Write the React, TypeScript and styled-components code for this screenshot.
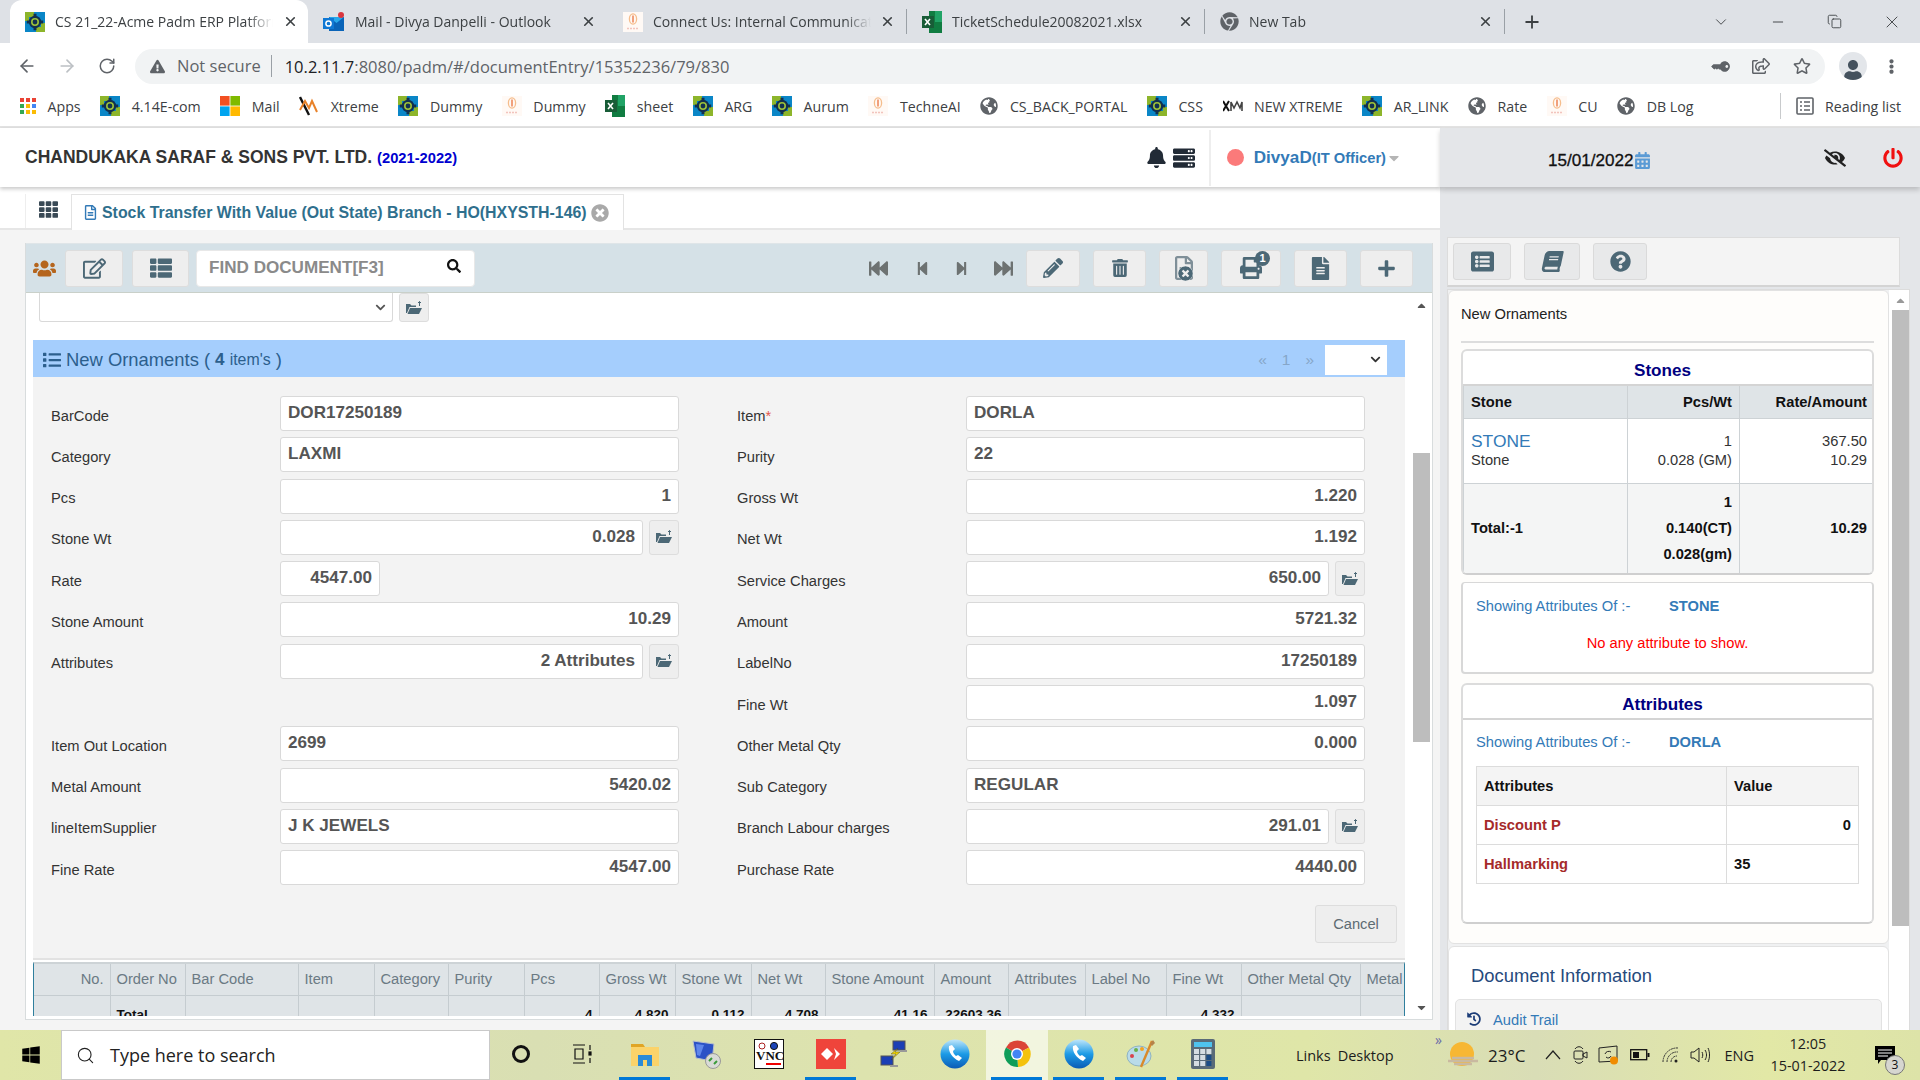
import React from "react";
import styled, { createGlobalStyle } from "styled-components";
import {
  FaBell,
  FaServer,
  FaRegEdit,
  FaThList,
  FaSearch,
  FaFastBackward,
  FaStepBackward,
  FaStepForward,
  FaFastForward,
  FaPencilAlt,
  FaTrashAlt,
  FaFileAlt,
  FaRegFileAlt,
  FaPlus,
  FaPrint,
  FaUsers,
  FaEyeSlash,
  FaPowerOff,
  FaCalendarAlt,
  FaBook,
  FaQuestionCircle,
  FaListAlt,
  FaList,
  FaTimesCircle,
  FaHistory,
  FaTh,
  FaCaretDown,
  FaCaretUp,
  FaChevronDown,
  FaGlobeAmericas,
  FaExclamationTriangle,
  FaKey,
  FaRegStar,
  FaRegShareSquare,
  FaUser,
  FaEllipsisV,
  FaWindows,
  FaChrome,
} from "react-icons/fa";
import { ArrowLeft, ArrowRight, RotateCw, ChevronDown, Minus, Copy, X, Plus, Search } from "lucide-react";

const GlobalStyle = createGlobalStyle`
  html, body {
    margin: 0;
    padding: 0;
    width: 1920px;
    height: 1080px;
    overflow: hidden;
    background: #fff;
    font-family: "Liberation Sans", Arial, sans-serif;
    font-size: 14.7px;
    color: #333;
  }
  * { box-sizing: border-box; }
`;

const CHROME_FONT = `"Open Sans", "Noto Sans", sans-serif`;

const Page = styled.div`
  width: 1920px;
  height: 1080px;
  display: flex;
  flex-direction: column;
  overflow: hidden;
`;

/* browser chrome */
const TabStrip = styled.div`
  height: 43px;
  flex: none;
  background: #dee1e6;
  display: flex;
  padding-left: 10px;
  font-family: ${CHROME_FONT};
  font-size: 14px;
  color: #3c4043;
`;

const BrowserTab = styled.div<{ $active?: boolean; $divider?: boolean; $width: number }>`
  position: relative;
  width: ${({ $width }) => $width}px;
  height: 43px;
  display: flex;
  align-items: center;
  padding: 0 ${({ $active }) => ($active ? 10 : 12)}px 0 15px;
  background: ${({ $active }) => ($active ? "#fff" : "transparent")};
  border-radius: ${({ $active }) => ($active ? "12px 12px 0 0" : "0")};

  &::after {
    content: "";
    display: ${({ $divider }) => ($divider ? "block" : "none")};
    position: absolute;
    right: 0;
    top: 9px;
    height: 25px;
    width: 1px;
    background: #9aa0a6;
  }
`;

const TabTitle = styled.span`
  margin-left: 10px;
  width: 218px;
  white-space: nowrap;
  overflow: hidden;
  -webkit-mask-image: linear-gradient(90deg, #000 88%, transparent 100%);
  mask-image: linear-gradient(90deg, #000 88%, transparent 100%);
`;

const TabClose = styled(X)`
  margin-left: auto;
  width: 15px;
  height: 15px;
  color: #3c4043;
  stroke-width: 2.6;
`;

const NewTab = styled.div`
  width: 54px;
  display: flex;
  align-items: center;
  justify-content: center;
  color: #3c4043;
`;

const WindowButtons = styled.div`
  margin-left: auto;
  display: flex;
  align-items: center;
`;

const WindowButton = styled.div`
  width: 57px;
  display: flex;
  justify-content: center;
  color: #3c4043;
`;

const AddressRow = styled.div`
  height: 43px;
  flex: none;
  display: flex;
  align-items: center;
  padding: 3px 0 0 7px;
  background: #fff;
  color: #5f6368;
`;

const NavButton = styled.div<{ $dim?: boolean }>`
  width: 40px;
  display: flex;
  justify-content: center;
  color: ${({ $dim }) => ($dim ? "#bcc0c4" : "#5f6368")};
`;

const Omnibox = styled.div`
  margin-left: 8px;
  width: 1690px;
  height: 35px;
  border-radius: 18px;
  background: #f1f3f4;
  display: flex;
  align-items: center;
  padding: 0 0 0 15px;
  font-family: ${CHROME_FONT};
  font-size: 16.5px;
`;

const NotSecure = styled.span`
  margin-left: 12px;
  padding-right: 10px;
  color: #5f6368;
  border-right: 1.5px solid #9aa0a6;
  line-height: 22px;
`;

const UrlHost = styled.span`
  margin-left: 13px;
  color: #202124;
`;

const UrlPath = styled.span`
  color: #5f6368;
`;

const OmniActions = styled.div`
  margin-left: auto;
  display: flex;
  align-items: center;
  gap: 23px;
  padding-right: 14px;
  color: #5f6368;
`;

const KeyGlyph = styled(FaKey)`
  transform: rotate(45deg);
`;

const Avatar = styled.div`
  margin-left: 14px;
  width: 28px;
  height: 28px;
  border-radius: 50%;
  background: #e3e6ea;
  display: flex;
  align-items: flex-end;
  justify-content: center;
  color: #45525e;
  overflow: hidden;
`;

const MenuDots = styled.div`
  margin-left: 17px;
  color: #5f6368;
  display: flex;
`;

const BookmarkBar = styled.div`
  height: 42px;
  flex: none;
  display: flex;
  align-items: center;
  padding: 0 0 0 20px;
  background: #fff;
  border-bottom: 2px solid #e3e3e3;
  font-family: ${CHROME_FONT};
  font-size: 14.2px;
  color: #3c4043;
`;

const Bookmark = styled.div`
  display: flex;
  align-items: center;
  gap: 11.5px;
  margin-right: 19.6px;
  white-space: nowrap;
`;

const ReadingList = styled.div`
  margin-left: auto;
  display: flex;
  align-items: center;
  gap: 11px;
  padding: 0 19px 0 15px;
  height: 26px;
  border-left: 1px solid #c8cacc;
`;

/* work area */
const Body = styled.div`
  flex: 1;
  display: flex;
  min-height: 0;
`;

const MainColumn = styled.div`
  width: 1440px;
  display: flex;
  flex-direction: column;
  background: #f4f4f4;
`;

const AppHeader = styled.div`
  height: 59px;
  flex: none;
  display: flex;
  align-items: center;
  padding: 0 38px 0 25px;
  background: #fff;
  box-shadow: 0 2px 4px rgba(0, 0, 0, 0.22);
  position: relative;
`;

const CompanyName = styled.span`
  font-weight: 700;
  font-size: 17.5px;
  color: #333;
`;

const FinYear = styled.span`
  margin-left: 5px;
  font-weight: 700;
  font-size: 14.7px;
  color: #0000d0;
`;

const HeaderTools = styled.div`
  margin-left: auto;
  display: flex;
  align-items: center;
  gap: 6px;
  color: #222b36;
`;

const UserBlock = styled.div`
  margin-left: 8px;
  height: 56px;
  padding-left: 16px;
  border-left: 2px solid #eee;
  display: flex;
  align-items: center;
`;

const StatusDot = styled.span`
  width: 17px;
  height: 17px;
  border-radius: 50%;
  background: #fb7a7a;
  margin-right: 10px;
`;

const UserName = styled.span`
  font-weight: 700;
  font-size: 17.1px;
  color: #337ab7;
`;

const UserRole = styled.span`
  font-weight: 700;
  font-size: 14.7px;
  color: #337ab7;
`;

const PageTabs = styled.div`
  height: 43px;
  flex: none;
  display: flex;
  background: #fff;
  border-bottom: 2px solid #e6e6e6;
  padding: 7px 0 0 25px;
`;

const GridTab = styled.div`
  width: 46px;
  display: flex;
  justify-content: center;
  padding-top: 6px;
  color: #3a4a56;
  border-left: 1px solid #eee;
`;

const DocTab = styled.div`
  width: 553px;
  height: 36px;
  display: flex;
  align-items: center;
  padding-left: 11px;
  gap: 4px;
  border: 1px solid #e3e3e3;
  border-bottom: none;
  background: #fff;
`;

const DocTabTitle = styled.span`
  font-weight: 700;
  font-size: 15.9px;
  color: #2f6f8d;
  white-space: nowrap;
`;

const Panel = styled.div`
  margin: 13px 7px 10px 25px;
  flex: 1;
  min-height: 0;
  display: flex;
  flex-direction: column;
  border: 1px solid #d8dcdd;
  border-top: none;
  background: #fff;
`;

const Toolbar = styled.div`
  height: 50px;
  flex: none;
  display: flex;
  align-items: center;
  padding: 0 19px 0 7px;
  background: #d5e1e7;
  border-top: 1px solid #dfe5e8;
  border-bottom: 1px solid #c9d0c9;
`;

const ToolButton = styled.div<{ $width: number }>`
  position: relative;
  width: ${({ $width }) => $width}px;
  height: 37px;
  display: flex;
  align-items: center;
  justify-content: center;
  background: #eee;
  border: 1px solid #ddd;
  border-radius: 3px;
  color: #4c6876;
  margin-left: 13px;
`;

const LeftTool = styled(ToolButton)`
  margin-left: 9px;
`;

const SearchBox = styled.div`
  margin-left: 7px;
  width: 279px;
  height: 37px;
  display: flex;
  align-items: center;
  justify-content: space-between;
  padding: 0 13px 0 12px;
  background: #fff;
  border-radius: 4px;
  border: 1px solid #e8e8e8;
  font-weight: 700;
  font-size: 17.1px;
  color: #8a8a8a;

  svg {
    color: #111;
    margin-bottom: 4px;
  }
`;

const ToolGroup = styled.div`
  margin-left: auto;
  display: flex;
  align-items: center;
`;

const Pager = styled.div`
  display: flex;
  align-items: center;
  color: #6d7272;
`;

const PagerIcon = styled.span<{ $gap: number }>`
  display: flex;
  margin-right: ${({ $gap }) => $gap}px;
`;

const Badge = styled.span`
  position: absolute;
  top: 0;
  right: 10px;
  width: 15px;
  height: 15px;
  border-radius: 50%;
  background: #4c6876;
  color: #fff;
  font-size: 11px;
  font-weight: 700;
  text-align: center;
  line-height: 15px;
`;

const CrossBadge = styled(FaTimesCircle)`
  position: absolute;
  right: 14px;
  bottom: 5px;
  background: #eee;
  border-radius: 50%;
`;

const ScrollFrame = styled.div`
  flex: 1;
  min-height: 0;
  display: flex;
`;

const ScrollContent = styled.div`
  width: 1385px;
  padding-left: 7px;
  padding-right: 5px;
  overflow: hidden;
`;

const SelectRow = styled.div`
  display: flex;
  gap: 6px;
  padding-left: 6px;
  height: 29px;
`;

const FakeSelect = styled.div`
  width: 354px;
  height: 29px;
  display: flex;
  align-items: center;
  justify-content: flex-end;
  padding-right: 6px;
  background: #fff;
  border: 1px solid #d9d9d9;
  border-top: none;
  border-radius: 0 0 3px 3px;
  color: #555;
`;

const FolderButton = styled.div<{ $height: number }>`
  width: 30px;
  height: ${({ $height }) => $height}px;
  flex: none;
  display: flex;
  align-items: center;
  justify-content: center;
  background: #eee;
  border: 1px solid #ddd;
  border-radius: 3px;
  color: #4c6876;
`;

const SectionBar = styled.div`
  margin-top: 18px;
  height: 37px;
  display: flex;
  align-items: center;
  padding: 2px 18px 0 10px;
  background: #a5cefd;
  color: #2c5f8d;
  font-size: 18.4px;
`;

const SectionIcon = styled.span`
  display: flex;
  margin-right: 5px;
`;

const SectionCount = styled.b`
  font-size: 17.1px;
  margin: 0 5px;
`;

const SectionSmall = styled.span`
  font-size: 15.9px;
`;

const SectionPager = styled.div`
  margin-left: auto;
  display: flex;
  align-items: center;
  gap: 15px;
  color: #86a6c8;
  font-size: 15.5px;
`;

const PageSelect = styled.div`
  margin-left: -4px;
  width: 62px;
  height: 30px;
  display: flex;
  align-items: center;
  justify-content: flex-end;
  padding-right: 6px;
  background: #fff;
  color: #333;
`;

const FormArea = styled.div`
  height: 583px;
  padding: 19px 0 0 18px;
  background: #f3f3f3;
  border-bottom: 2px solid #e2e2e2;
`;

const FormGrid = styled.div`
  display: grid;
  grid-template-columns: 628px 628px;
  grid-auto-rows: 35px;
  column-gap: 58px;
  row-gap: 6.3px;
`;

const Field = styled.div`
  display: flex;
  align-items: center;
`;

const FieldLabel = styled.div`
  width: 229px;
  flex: none;
  padding-top: 4px;
  color: #333;
  font-size: 14.7px;
`;

const Required = styled.span`
  color: #e2574c;
`;

const FieldValue = styled.div<{ $right?: boolean; $width?: number }>`
  ${({ $width }) => ($width ? `width: ${$width}px; flex: none;` : "flex: 1;")}
  height: 35px;
  margin-right: ${({ $width }) => ($width ? "auto" : "0")};
  line-height: 32.5px;
  padding: 0 7px;
  background: #fff;
  border: 1px solid #d9d9d9;
  border-radius: 3px;
  font-weight: 700;
  font-size: 17.1px;
  color: #555;
  text-align: ${({ $right }) => ($right ? "right" : "left")};
  white-space: nowrap;
`;

const FolderInField = styled(FolderButton)`
  margin-left: 6px;
`;

const FormActions = styled.div`
  margin-top: 20px;
  padding-right: 8px;
  display: flex;
  justify-content: flex-end;
`;

const CancelButton = styled.div`
  width: 82px;
  height: 38px;
  display: flex;
  align-items: center;
  justify-content: center;
  background: #eee;
  border: 1px solid #ddd;
  border-radius: 3px;
  color: #5d6b72;
  font-size: 14.7px;
`;

const GridClip = styled.div`
  margin-top: 2px;
  height: 54px;
  overflow: hidden;
  border-top: 2px solid #cdd3d6;
  border-left: 1px solid #2f7f9d;
  border-right: 1px solid #2f7f9d;
`;

const DataTable = styled.table`
  table-layout: fixed;
  width: 1420px;
  border-collapse: collapse;
  background: #dfe4e7;
  font-size: 14.7px;
`;

const HeadCell = styled.th<{ $right?: boolean }>`
  height: 31px;
  padding: 0 6px;
  font-weight: 400;
  color: #6b7a84;
  text-align: ${({ $right }) => ($right ? "right" : "left")};
  border-right: 1px solid #c5ccd0;
  border-bottom: 1px solid #c5ccd0;
  white-space: nowrap;
  overflow: hidden;
`;

const TotalCell = styled.td<{ $left?: boolean }>`
  height: 36px;
  padding: 11px 6px 0;
  font-weight: 700;
  font-size: 13.5px;
  color: #111;
  vertical-align: top;
  text-align: ${({ $left }) => ($left ? "left" : "right")};
  border-right: 1px solid #c5ccd0;
`;

const ScrollBar = styled.div<{ $width: number }>`
  width: ${({ $width }) => $width}px;
  flex: none;
  display: flex;
  flex-direction: column;
  align-items: center;
  padding-bottom: 4px;
  background: #fff;
  color: #555;
`;

const ScrollArrow = styled.div<{ $top?: number }>`
  height: 15px;
  margin-top: ${({ $top }) => $top || 0}px;
  display: flex;
  align-items: center;
  justify-content: center;
`;

const ScrollThumb = styled.div<{ $top: number; $height: number; $width: number }>`
  margin-top: ${({ $top }) => $top}px;
  width: ${({ $width }) => $width}px;
  height: ${({ $height }) => $height}px;
  background: #bdbdbd;
  flex: none;
`;

const ScrollSpacer = styled.div`
  flex: 1;
`;

/* right column */
const SideColumn = styled.div`
  width: 480px;
  display: flex;
  flex-direction: column;
  background: #e4e6e9;
`;

const SideHeader = styled.div`
  height: 59px;
  flex: none;
  display: flex;
  align-items: center;
  padding: 0 17px 0 108px;
  background: #e4e6e9;
  box-shadow: 0 3px 5px rgba(0, 0, 0, 0.18);
  position: relative;
`;

const DateText = styled.span`
  padding-top: 6px;
  font-weight: 400;
  font-size: 17.1px;
  color: #111;
  -webkit-text-stroke: 0.3px #111;
`;

const DateIcon = styled.span`
  display: flex;
  padding-top: 6px;
  color: #5b9bd5;
`;

const HeaderSideIcons = styled.div`
  margin-left: auto;
  display: flex;
  align-items: center;
  gap: 37px;
`;

const SideButtons = styled.div`
  margin: 50px 20px 0 7px;
  height: 50px;
  flex: none;
  display: flex;
  gap: 13px;
  padding: 5px 0 0 5px;
  background: #f4f4f4;
  border: 1px solid #dcdcdc;
  border-bottom: 2px solid #d4d4d4;
`;

const SideButton = styled.div<{ $width: number }>`
  width: ${({ $width }) => $width}px;
  height: 37px;
  display: flex;
  align-items: center;
  justify-content: center;
  background: #e8e9ea;
  border: 1px solid #dadada;
  border-radius: 3px;
  color: #4c6876;
`;

const SlantBook = styled(FaBook)`
  transform: skewX(-12deg);
`;

const SideScroll = styled.div`
  flex: 1;
  min-height: 0;
  margin: 2px 10px 0 7px;
  display: flex;
  overflow: hidden;
  background: #f0f1f2;
  border: 1px solid #dcdcdc;
  border-bottom: none;
`;

const SideCards = styled.div`
  width: 441px;
  flex: none;
`;

const InfoCard = styled.div`
  height: 654px;
  padding: 0 14px 0 12px;
  background: #fefdfb;
  border: 1px solid #e2e2e2;
  border-radius: 6px;
`;

const CardCaption = styled.div`
  height: 52px;
  line-height: 46px;
  color: #222;
  font-size: 14.7px;
  border-bottom: 2px solid #ddd;
`;

const TitledBox = styled.div<{ $top: number; $height: number }>`
  margin-top: ${({ $top }) => $top}px;
  height: ${({ $height }) => $height}px;
  background: #fff;
  border-radius: 6px;
  border: 2px solid #dcdcdc;
  border-bottom: 2px solid #cfcfcf;
  overflow: hidden;
`;

const BoxTitle = styled.div`
  height: 35px;
  padding: 3px 10px 0 0;
  line-height: 33px;
  text-align: center;
  font-weight: 700;
  font-size: 17.1px;
  color: #000080;
  border-bottom: 2px solid #d4d4d4;
`;

const StoneTable = styled.table`
  table-layout: fixed;
  width: 100%;
  border-collapse: collapse;
  font-size: 14.7px;
`;

const StoneHead = styled.th<{ $right?: boolean }>`
  height: 32px;
  padding: 0 7px;
  background: #dfe4e7;
  font-size: 14.7px;
  color: #111;
  text-align: ${({ $right }) => ($right ? "right" : "left")};
  border: 1px solid #cdd2d5;
  border-top: none;
`;

const StoneCell = styled.td<{ $right?: boolean; $total?: boolean; $height: number }>`
  height: ${({ $height }) => $height}px;
  padding: 0 7px;
  line-height: 19px;
  color: ${({ $total }) => ($total ? "#111" : "#333")};
  font-weight: ${({ $total }) => ($total ? 700 : 400)};
  background: ${({ $total }) => ($total ? "#f4f5f5" : "#fff")};
  text-align: ${({ $right }) => ($right ? "right" : "left")};
  border: 1px solid #cdd2d5;
`;

const StoneName = styled.div`
  font-size: 17.4px;
  color: #337ab7;
`;

const TallLines = styled.div`
  line-height: 26px;
`;

const StoneAttrBox = styled.div`
  margin-top: 7px;
  height: 92px;
  padding: 15px 13px;
  background: #fff;
  border-radius: 4px;
  border: 2px solid #d8d8d8;
  border-top: 1px solid #d8d8d8;
`;

const ShowingRow = styled.div`
  display: flex;
  color: #337ab7;
  font-size: 14.7px;
`;

const ShowingLabel = styled.span`
  width: 193px;
  flex: none;
`;

const EmptyMessage = styled.div`
  margin-top: 21px;
  text-align: center;
  color: #f00;
`;

const AttrBody = styled.div`
  padding: 14px 13px;
`;

const AttrTable = styled.table`
  table-layout: fixed;
  width: 382px;
  margin-top: 16px;
  border-collapse: collapse;
  font-size: 14.7px;
`;

const AttrHead = styled.th`
  height: 39px;
  padding: 0 7px;
  background: #f4f4f4;
  color: #111;
  text-align: left;
  border: 1.5px solid #dcdcdc;
`;

const AttrName = styled.td`
  height: 39px;
  padding: 0 7px;
  font-weight: 700;
  color: #a52a2a;
  border: 1px solid #dcdcdc;
`;

const AttrValue = styled.td<{ $right?: boolean }>`
  padding: 0 7px;
  font-weight: 700;
  color: #111;
  text-align: ${({ $right }) => ($right ? "right" : "left")};
  border: 1px solid #dcdcdc;
`;

const DocCard = styled.div`
  margin-top: 2px;
  height: 200px;
  padding: 0 6px;
  background: #fff;
  border: 1px solid #e2e2e2;
  border-radius: 6px;
`;

const DocTitle = styled.div`
  padding: 17px 0 0 16px;
  font-size: 18.4px;
  line-height: 24px;
  color: #264a7c;
`;

const DocLinks = styled.div`
  margin-top: 11px;
  height: 100px;
  padding: 12px 11px;
  display: flex;
  align-items: flex-start;
  gap: 12px;
  background: #f3f3f3;
  border: 1px solid #e2e2e2;
  border-radius: 5px;
  color: #337ab7;
  font-size: 14.7px;

  svg {
    color: #1c3d78;
  }
`;

/* taskbar */
const Taskbar = styled.div`
  height: 50px;
  flex: none;
  display: flex;
  align-items: stretch;
  background: linear-gradient(90deg, #e0e6a8 0%, #d9dfb3 28%, #dde3ae 45%, #dfe6a8 68%, #d9ddb6 80%, #e2e8a6 92%, #dde3a8 100%);
  font-family: ${CHROME_FONT};
  color: #1c1c1c;
`;

const StartButton = styled.div`
  width: 61px;
  flex: none;
  display: flex;
  align-items: center;
  justify-content: center;
  color: #000;
`;

const TaskSearch = styled.div`
  width: 429px;
  flex: none;
  display: flex;
  align-items: center;
  gap: 15px;
  padding-left: 14px;
  background: #fff;
  border: 1px solid #c9c9c9;
  font-size: 18px;
  color: #222;
`;

const TaskItem = styled.div<{ $open?: boolean; $active?: boolean }>`
  position: relative;
  width: 62px;
  flex: none;
  display: flex;
  align-items: center;
  justify-content: center;
  padding-bottom: 2px;
  background: ${({ $active }) => ($active ? "rgba(255,255,255,0.62)" : "transparent")};

  &::after {
    content: "";
    display: ${({ $open }) => ($open ? "block" : "none")};
    position: absolute;
    left: 5px;
    right: 6px;
    bottom: 0;
    height: 3px;
    background: #0078d7;
  }
`;

const TaskLinks = styled.div`
  position: relative;
  display: flex;
  align-items: center;
  gap: 7px;
  margin-left: 62px;
  width: 152px;
  flex: none;
  font-size: 14.5px;
`;

const Overflow = styled.span`
  position: absolute;
  right: 6px;
  top: 0;
  color: #6a6aa8;
  font-size: 14px;
`;

const Tray = styled.div`
  flex: 1;
  display: flex;
  align-items: center;
  font-size: 14.5px;
`;

const TrayIcon = styled.span<{ $left: number }>`
  display: flex;
  margin-left: ${({ $left }) => $left}px;
`;

const TrayText = styled.span<{ $left: number; $size?: number }>`
  margin-left: ${({ $left }) => $left}px;
  font-size: ${({ $size }) => $size || 14.5}px;
  white-space: nowrap;
`;

const Clock = styled.div`
  margin-left: 7px;
  width: 94px;
  text-align: center;
  line-height: 22px;
  font-size: 14.4px;
`;

const Notify = styled.span`
  position: relative;
  margin-left: 20px;
  display: flex;
`;

const NotifyCount = styled.span`
  position: absolute;
  left: 10px;
  top: 9px;
  width: 20px;
  height: 20px;
  border-radius: 50%;
  background: #d6d6d0;
  border: 1px solid #777;
  font-size: 12px;
  line-height: 18px;
  text-align: center;
  color: #111;
`;

/* small drawings */
const AcmeIcon = ({ size = 20 }: { size?: number }) => (
  <svg width={size} height={size} viewBox="0 0 20 20">
    <rect width="20" height="20" fill="#0a86c7" />
    <path d="M0 0h9v5H4v4H0zM20 20h-9v-5h5v-4h4z" fill="#8db52b" />
    <circle cx="10" cy="10" r="6.2" fill="#12304f" />
    <path d="M10 1.8v3M10 15.2v3M1.8 10h3M15.2 10h3" stroke="#12304f" strokeWidth="3" />
    <circle cx="10" cy="10" r="3.2" fill="none" stroke="#9cc13a" strokeWidth="1.6" />
  </svg>
);

const ConnectIcon = ({ size = 20 }: { size?: number }) => (
  <svg width={size} height={size} viewBox="0 0 20 20">
    <rect width="20" height="20" fill="#fff9f5" />
    <ellipse cx="10" cy="7" rx="3.6" ry="5.2" fill="none" stroke="#f5bd8c" strokeWidth="1.3" />
    <path d="M10 3.5v7" stroke="#ee8a5e" strokeWidth="1.6" />
    <path d="M4 16.5h12" stroke="#f2c4bd" strokeWidth="1.4" strokeDasharray="2 1" />
  </svg>
);

const ExcelIcon = () => (
  <svg width="20" height="22" viewBox="0 0 20 22">
    <path d="M7 0h13v22H7z" fill="#107c41" />
    <path d="M13 0h7v11h-7z" fill="#21a366" />
    <rect x="0" y="5" width="12" height="12" fill="#185c37" />
    <path d="M3 8l5 6M8 8l-5 6" stroke="#fff" strokeWidth="1.6" />
  </svg>
);

const OutlookIcon = () => (
  <svg width="22" height="20" viewBox="0 0 22 20">
    <path d="M6 5h15v14H6z" fill="#0a64b8" />
    <path d="M6 5l7.5 6L21 5z" fill="#28a8ea" />
    <rect x="0" y="6" width="11" height="11" fill="#0f78d4" />
    <circle cx="5.5" cy="11.5" r="2.6" fill="none" stroke="#fff" strokeWidth="1.5" />
    <circle cx="18" cy="3" r="3" fill="#d9363e" />
  </svg>
);

const MsIcon = () => (
  <svg width="20" height="20" viewBox="0 0 20 20">
    <rect width="9.6" height="9.6" fill="#f25022" />
    <rect x="10.4" width="9.6" height="9.6" fill="#7fba00" />
    <rect y="10.4" width="9.6" height="9.6" fill="#00a4ef" />
    <rect x="10.4" y="10.4" width="9.6" height="9.6" fill="#ffb900" />
  </svg>
);

const AppsIcon = () => {
  const colors = ["#ea4335", "#ea4335", "#ea4335", "#34a853", "#fbbc04", "#4285f4", "#34a853", "#fbbc04", "#fbbc04"];
  return (
    <svg width="16" height="16" viewBox="0 0 16 16">
      {colors.map((color, i) => (
        <rect key={i} x={(i % 3) * 6} y={Math.floor(i / 3) * 6} width="4" height="4" fill={color} />
      ))}
    </svg>
  );
};

const XtremeIcon = () => (
  <svg width="20" height="20" viewBox="0 0 20 20">
    <path d="M1 1l9 18" stroke="#111" strokeWidth="2.4" />
    <path d="M1 14L6 5l4 7 3-7 5 11" fill="none" stroke="#e8822a" strokeWidth="2" />
  </svg>
);

const XmIcon = () => (
  <svg width="20" height="12" viewBox="0 0 20 12">
    <path d="M0 1l6 10M6 1L0 11" stroke="#111" strokeWidth="2" />
    <path d="M8 11V2l3 6 3-6 3 6 2-6v9" fill="none" stroke="#444" strokeWidth="1.6" />
  </svg>
);

const GlobeIcon = () => <FaGlobeAmericas size={18} color="#5f6368" />;

const ReadingIcon = () => (
  <svg width="18" height="18" viewBox="0 0 18 18" fill="none" stroke="#5f6368" strokeWidth="1.6">
    <rect x="1" y="1" width="16" height="16" rx="1" />
    <path d="M4 5h2M8 5h6M4 9h2M8 9h6M4 13h2M8 13h6" />
  </svg>
);

const FolderGlyph = () => (
  <svg width="18" height="16" viewBox="0 0 18 16" fill="currentColor">
    <path d="M1 4h4l1.5 1.5H11V7H4.5L2 13H1z" />
    <path d="M5 8h12l-3 6H2.5z" />
    <path d="M14.5 6V1.5M13 3l1.5-1.5L16 3" fill="none" stroke="currentColor" strokeWidth="1" />
  </svg>
);

const TaskView = () => (
  <svg width="22" height="20" viewBox="0 0 22 20" fill="none" stroke="#111" strokeWidth="1.2">
    <path d="M1 1h12M1 19h12M3 5h8v10H3zM18 1v5M18 14v5" />
    <rect x="17" y="8" width="2" height="3" fill="#111" />
  </svg>
);

const FolderTask = () => (
  <svg width="28" height="24" viewBox="0 0 28 24">
    <path d="M0 2h12l2 3H0z" fill="#e0a526" />
    <path d="M0 5h28v19H0z" fill="#fbd36a" />
    <path d="M7 24V13h14v11h-5v-6h-4v6z" fill="#2a8bd8" />
  </svg>
);

const MonitorTask = () => (
  <svg width="30" height="30" viewBox="0 0 30 30">
    <path d="M1 2l21 3-2 17L4 19z" fill="#2b52c6" stroke="#b9c0cc" />
    <path d="M4 5l8 1-4 11-3-1z" fill="#5f86ea" />
    <circle cx="21" cy="22" r="7.5" fill="#d9dbd6" stroke="#999" />
    <path d="M17 22l3-3M25 22l-3 3" stroke="#3a9b3a" strokeWidth="2" />
  </svg>
);

const VncTask = () => (
  <svg width="30" height="30" viewBox="0 0 30 30">
    <rect x=".5" y=".5" width="29" height="29" fill="#fff" stroke="#111" />
    <circle cx="20" cy="7" r="3.6" fill="#1c44b8" stroke="#111" />
    <circle cx="8" cy="7" r="3" fill="none" stroke="#a22" />
    <text x="2" y="21" fontFamily="Liberation Serif, serif" fontWeight="700" fontSize="13" fill="#111">VNC</text>
    <rect x="12" y="24" width="15" height="2" fill="#e00" />
  </svg>
);

const AnyDeskTask = () => (
  <svg width="30" height="30" viewBox="0 0 30 30">
    <rect width="30" height="30" fill="#ef443b" />
    <path d="M11 9l6 6-6 6-6-6z" fill="#fff" />
    <path d="M18 9l6 6-6 6 2-6z" fill="#fff" />
  </svg>
);

const NetTask = () => (
  <svg width="30" height="30" viewBox="0 0 30 30">
    <rect x="15" y="2" width="12" height="9" fill="#1b3fb5" stroke="#555" />
    <rect x="3" y="17" width="12" height="9" fill="#1b3fb5" stroke="#555" />
    <path d="M12 27h8M22 12h7" stroke="#999" strokeWidth="2" />
    <path d="M20 9l-7 6 5 0-5 6 9-8h-5z" fill="#f2d500" stroke="#333" strokeWidth=".4" />
  </svg>
);

const PhoneTask = () => (
  <svg width="30" height="30" viewBox="0 0 30 30">
    <defs>
      <linearGradient id="phoneBlue" x1="0" y1="0" x2="0" y2="1">
        <stop offset="0" stopColor="#bfe6fb" />
        <stop offset=".5" stopColor="#1c9be6" />
        <stop offset="1" stopColor="#0b5bb5" />
      </linearGradient>
    </defs>
    <circle cx="15" cy="15" r="14.5" fill="url(#phoneBlue)" />
    <path d="M9 7c-1 5 3 12 10 15l3-3-4-3-2 1c-2-2-3-3-3-5l2-2-3-4z" fill="#fff" />
  </svg>
);

const ChromeTask = () => (
  <svg width="28" height="28" viewBox="0 0 28 28">
    <path d="M14 14L3 7.5A13 13 0 0 1 26 7.5z" fill="#db4437" />
    <path d="M14 14l12-6.5A13 13 0 0 1 15 27z" fill="#f4c20d" />
    <path d="M14 14l1 13A13 13 0 0 1 3 7.5z" fill="#0f9d58" />
    <circle cx="14" cy="14" r="6" fill="#fff" />
    <circle cx="14" cy="14" r="4.6" fill="#4285f4" />
  </svg>
);

const PaintTask = () => (
  <svg width="30" height="30" viewBox="0 0 30 30">
    <ellipse cx="13" cy="17" rx="12" ry="10" fill="#b9dbe9" stroke="#8fb3c2" />
    <circle cx="6" cy="17" r="2" fill="#d9434e" />
    <circle cx="10" cy="11" r="2" fill="#6bb04a" />
    <circle cx="16" cy="10" r="2" fill="#f2a324" />
    <path d="M26 2l-11 26" stroke="#d98a2b" strokeWidth="2.4" />
    <path d="M24 5l3-4 2 3-3 3z" fill="#b5834a" />
  </svg>
);

const CalcTask = () => (
  <svg width="24" height="30" viewBox="0 0 24 30">
    <rect width="24" height="30" rx="2" fill="#5a6b78" />
    <rect x="3" y="3" width="18" height="5" fill="#4fc3ee" />
    {[0, 1, 2].map((c) =>
      [0, 1, 2].map((r) => (
        <rect key={`${c}-${r}`} x={3 + c * 6.2} y={10 + r * 6} width="5" height="5" fill={c === 2 && r > 0 ? "#1c4d86" : "#d5dde2"} />
      ))
    )}
  </svg>
);

const WeatherIcon = () => (
  <svg width="30" height="26" viewBox="0 0 30 26">
    <circle cx="14" cy="12" r="12" fill="#f7b733" />
    <path d="M4 16h22M0 19h30M6 22h18" stroke="#c9b9a0" strokeWidth="2.4" />
  </svg>
);

const MeetIcon = () => (
  <svg width="15" height="20" viewBox="0 0 15 20" fill="none" stroke="#222" strokeWidth="1">
    <rect x="1" y="6" width="9" height="8" rx="1" />
    <path d="M10 9l4-2v6l-4-2zM2 4c2-3 6-3 8 0M2 16c2 3 6 3 8 0" />
  </svg>
);

const SyncIcon = () => (
  <svg width="22" height="20" viewBox="0 0 22 20" fill="none" stroke="#222" strokeWidth="1">
    <path d="M1 3l18-2v15L1 17z" />
    <path d="M7 9a4 4 0 0 1 6-2M13 11a3 3 0 0 1-5 1" />
    <circle cx="16" cy="15.5" r="4" fill="#f08c00" stroke="none" />
  </svg>
);

const BatteryIcon = () => (
  <svg width="20" height="12" viewBox="0 0 20 12">
    <rect x=".7" y=".7" width="16" height="10" fill="none" stroke="#111" strokeWidth="1.3" />
    <rect x="3" y="3" width="6" height="6" fill="#111" />
    <rect x="17.5" y="4" width="2" height="4" fill="#111" />
  </svg>
);

const WifiIcon = () => (
  <svg width="18" height="18" viewBox="0 0 18 18" fill="none" stroke="#333" strokeWidth="1">
    <path d="M1 16A14 14 0 0 1 16 2M5 16A10 10 0 0 1 16 6M9 16a6 6 0 0 1 6-6" strokeDasharray="2 .6" />
    <circle cx="14" cy="15" r="1.5" fill="#222" stroke="none" />
  </svg>
);

const VolumeIcon = () => (
  <svg width="20" height="18" viewBox="0 0 20 18" fill="none" stroke="#222" strokeWidth="1">
    <path d="M1 6h3l5-4v14l-5-4H1zM12 6c1 2 1 4 0 6M15 4c2 3 2 7 0 10M18 2c2 4 2 10 0 14" />
  </svg>
);

const NotifyIcon = () => (
  <svg width="20" height="18" viewBox="0 0 20 18">
    <path d="M0 0h20v14H6l-3 4v-4H0z" fill="#000" />
    <path d="M3 4h14M3 7h14M3 10h10" stroke="#fff" strokeWidth="1" />
  </svg>
);

/* data */
type Tab = { title: string; icon: React.ReactNode; width: number; active?: boolean; divider?: boolean };

const TABS: Tab[] = [
  { title: "CS 21_22-Acme Padm ERP Platform", icon: <AcmeIcon />, width: 298, active: true },
  { title: "Mail - Divya Danpelli - Outlook", icon: <OutlookIcon />, width: 300 },
  { title: "Connect Us: Internal Communication", icon: <ConnectIcon />, width: 299, divider: true },
  { title: "TicketSchedule20082021.xlsx", icon: <ExcelIcon />, width: 298, divider: true },
  { title: "New Tab", icon: <FaChrome size={19} color="#5f6368" />, width: 300, divider: true },
];

const BOOKMARKS: { label: string; icon: React.ReactNode }[] = [
  { label: "Apps", icon: <AppsIcon /> },
  { label: "4.14E-com", icon: <AcmeIcon /> },
  { label: "Mail", icon: <MsIcon /> },
  { label: "Xtreme", icon: <XtremeIcon /> },
  { label: "Dummy", icon: <AcmeIcon /> },
  { label: "Dummy", icon: <ConnectIcon /> },
  { label: "sheet", icon: <ExcelIcon /> },
  { label: "ARG", icon: <AcmeIcon /> },
  { label: "Aurum", icon: <AcmeIcon /> },
  { label: "TechneAI", icon: <ConnectIcon /> },
  { label: "CS_BACK_PORTAL", icon: <GlobeIcon /> },
  { label: "CSS", icon: <AcmeIcon /> },
  { label: "NEW XTREME", icon: <XmIcon /> },
  { label: "AR_LINK", icon: <AcmeIcon /> },
  { label: "Rate", icon: <GlobeIcon /> },
  { label: "CU", icon: <ConnectIcon /> },
  { label: "DB Log", icon: <GlobeIcon /> },
];

type FieldRow = { label: string; value: string; right?: boolean; folder?: boolean; width?: number; required?: boolean };

const FIELDS: (FieldRow | null)[] = [
  { label: "BarCode", value: "DOR17250189" },
  { label: "Item", value: "DORLA", required: true },
  { label: "Category", value: "LAXMI" },
  { label: "Purity", value: "22" },
  { label: "Pcs", value: "1", right: true },
  { label: "Gross Wt", value: "1.220", right: true },
  { label: "Stone Wt", value: "0.028", right: true, folder: true },
  { label: "Net Wt", value: "1.192", right: true },
  { label: "Rate", value: "4547.00", right: true, width: 100 },
  { label: "Service Charges", value: "650.00", right: true, folder: true },
  { label: "Stone Amount", value: "10.29", right: true },
  { label: "Amount", value: "5721.32", right: true },
  { label: "Attributes", value: "2 Attributes", right: true, folder: true },
  { label: "LabelNo", value: "17250189", right: true },
  null,
  { label: "Fine Wt", value: "1.097", right: true },
  { label: "Item Out Location", value: "2699" },
  { label: "Other Metal Qty", value: "0.000", right: true },
  { label: "Metal Amount", value: "5420.02", right: true },
  { label: "Sub Category", value: "REGULAR" },
  { label: "lineItemSupplier", value: "J K JEWELS" },
  { label: "Branch Labour charges", value: "291.01", right: true, folder: true },
  { label: "Fine Rate", value: "4547.00", right: true },
  { label: "Purchase Rate", value: "4440.00", right: true },
];

const COLUMNS: { title: string; width: number; right?: boolean; total?: string; totalLeft?: boolean }[] = [
  { title: "No.", width: 76, right: true },
  { title: "Order No", width: 75, total: "Total", totalLeft: true },
  { title: "Bar Code", width: 113 },
  { title: "Item", width: 76 },
  { title: "Category", width: 74 },
  { title: "Purity", width: 76 },
  { title: "Pcs", width: 75, total: "4" },
  { title: "Gross Wt", width: 76, total: "4.820" },
  { title: "Stone Wt", width: 76, total: "0.112" },
  { title: "Net Wt", width: 74, total: "4.708" },
  { title: "Stone Amount", width: 109, total: "41.16" },
  { title: "Amount", width: 74, total: "22603.36" },
  { title: "Attributes", width: 77 },
  { title: "Label No", width: 81 },
  { title: "Fine Wt", width: 75, total: "4.332" },
  { title: "Other Metal Qty", width: 119 },
  { title: "Metal Rate", width: 95 },
];

export default function App() {
  return (
    <Page>
      <GlobalStyle />

      <TabStrip>
        {TABS.map((tab) => (
          <BrowserTab key={tab.title} $active={tab.active} $divider={tab.divider} $width={tab.width}>
            {tab.icon}
            <TabTitle>{tab.title}</TabTitle>
            <TabClose />
          </BrowserTab>
        ))}
        <NewTab>
          <Plus size={20} strokeWidth={2.2} />
        </NewTab>
        <WindowButtons>
          <WindowButton>
            <ChevronDown size={18} strokeWidth={1.2} />
          </WindowButton>
          <WindowButton>
            <Minus size={16} strokeWidth={1.4} />
          </WindowButton>
          <WindowButton>
            <Copy size={15} strokeWidth={1.4} />
          </WindowButton>
          <WindowButton>
            <X size={20} strokeWidth={1.1} />
          </WindowButton>
        </WindowButtons>
      </TabStrip>

      <AddressRow>
        <NavButton>
          <ArrowLeft size={20} />
        </NavButton>
        <NavButton $dim>
          <ArrowRight size={20} />
        </NavButton>
        <NavButton>
          <RotateCw size={18} />
        </NavButton>
        <Omnibox>
          <FaExclamationTriangle size={15} color="#5f6368" />
          <NotSecure>Not secure</NotSecure>
          <UrlHost>10.2.11.7</UrlHost>
          <UrlPath>:8080/padm/#/documentEntry/15352236/79/830</UrlPath>
          <OmniActions>
            <KeyGlyph size={15} />
            <FaRegShareSquare size={18} />
            <FaRegStar size={18} />
          </OmniActions>
        </Omnibox>
        <Avatar>
          <FaUser size={20} />
        </Avatar>
        <MenuDots>
          <FaEllipsisV size={15} />
        </MenuDots>
      </AddressRow>

      <BookmarkBar>
        {BOOKMARKS.map((mark, i) => (
          <Bookmark key={`${mark.label}-${i}`}>
            {mark.icon}
            <span>{mark.label}</span>
          </Bookmark>
        ))}
        <ReadingList>
          <ReadingIcon />
          <span>Reading list</span>
        </ReadingList>
      </BookmarkBar>

      <Body>
        <MainColumn>
          <AppHeader>
            <CompanyName>CHANDUKAKA SARAF &amp; SONS PVT. LTD.</CompanyName>
            <FinYear>(2021-2022)</FinYear>
            <HeaderTools>
              <FaBell size={21} />
              <FaServer size={22} />
              <UserBlock>
                <StatusDot />
                <UserName>DivyaD</UserName>
                <UserRole>(IT Officer)</UserRole>
                <FaCaretDown size={16} color="#b5b5b5" />
              </UserBlock>
            </HeaderTools>
          </AppHeader>

          <PageTabs>
            <GridTab>
              <FaTh size={19} />
            </GridTab>
            <DocTab>
              <FaRegFileAlt size={15} color="#337ab7" />
              <DocTabTitle>Stock Transfer With Value (Out State) Branch - HO(HXYSTH-146)</DocTabTitle>
              <FaTimesCircle size={18} color="#a9a9a9" />
            </DocTab>
          </PageTabs>

          <Panel>
            <Toolbar>
              <FaUsers size={23} color="#b5651d" />
              <LeftTool $width={58}>
                <FaRegEdit size={23} />
              </LeftTool>
              <LeftTool $width={57}>
                <FaThList size={22} />
              </LeftTool>
              <SearchBox>
                <span>FIND DOCUMENT[F3]</span>
                <FaSearch size={14} />
              </SearchBox>
              <ToolGroup>
                <Pager>
                  <PagerIcon $gap={27}>
                    <FaFastBackward size={19} />
                  </PagerIcon>
                  <PagerIcon $gap={24}>
                    <FaStepBackward size={15} />
                  </PagerIcon>
                  <PagerIcon $gap={25}>
                    <FaStepForward size={15} />
                  </PagerIcon>
                  <PagerIcon $gap={0}>
                    <FaFastForward size={19} />
                  </PagerIcon>
                </Pager>
                <ToolButton $width={54}>
                  <FaPencilAlt size={20} />
                </ToolButton>
                <ToolButton $width={53}>
                  <FaTrashAlt size={18} />
                </ToolButton>
                <ToolButton $width={49}>
                  <FaRegFileAlt size={24} color="#7f8f98" />
                  <CrossBadge size={15} />
                </ToolButton>
                <ToolButton $width={60}>
                  <FaPrint size={22} />
                  <Badge>1</Badge>
                </ToolButton>
                <ToolButton $width={53}>
                  <FaFileAlt size={23} />
                </ToolButton>
                <ToolButton $width={53}>
                  <FaPlus size={19} />
                </ToolButton>
              </ToolGroup>
            </Toolbar>

            <ScrollFrame>
              <ScrollContent>
                <SelectRow>
                  <FakeSelect>
                    <FaChevronDown size={11} />
                  </FakeSelect>
                  <FolderButton $height={29}>
                    <FolderGlyph />
                  </FolderButton>
                </SelectRow>

                <SectionBar>
                  <SectionIcon>
                    <FaList size={18} />
                  </SectionIcon>
                  New Ornaments (<SectionCount>4</SectionCount>
                  <SectionSmall>item's</SectionSmall>&nbsp;)
                  <SectionPager>
                    <span>«</span>
                    <span>1</span>
                    <span>»</span>
                    <PageSelect>
                      <FaChevronDown size={11} />
                    </PageSelect>
                  </SectionPager>
                </SectionBar>

                <FormArea>
                  <FormGrid>
                    {FIELDS.map((field, i) =>
                      field ? (
                        <Field key={field.label}>
                          <FieldLabel>
                            {field.label}
                            {field.required && <Required>*</Required>}
                          </FieldLabel>
                          <FieldValue $right={field.right} $width={field.width}>
                            {field.value}
                          </FieldValue>
                          {field.folder && (
                            <FolderInField $height={35}>
                              <FolderGlyph />
                            </FolderInField>
                          )}
                        </Field>
                      ) : (
                        <div key={i} />
                      )
                    )}
                  </FormGrid>
                  <FormActions>
                    <CancelButton>Cancel</CancelButton>
                  </FormActions>
                </FormArea>

                <GridClip>
                  <DataTable>
                    <colgroup>
                      {COLUMNS.map((col) => (
                        <col key={col.title} width={col.width} />
                      ))}
                    </colgroup>
                    <thead>
                      <tr>
                        {COLUMNS.map((col) => (
                          <HeadCell key={col.title} $right={col.right}>
                            {col.title}
                          </HeadCell>
                        ))}
                      </tr>
                    </thead>
                    <tbody>
                      <tr>
                        {COLUMNS.map((col) => (
                          <TotalCell key={col.title} $left={col.totalLeft}>
                            {col.total}
                          </TotalCell>
                        ))}
                      </tr>
                    </tbody>
                  </DataTable>
                </GridClip>
              </ScrollContent>

              <ScrollBar $width={22}>
                <ScrollArrow $top={5}>
                  <FaCaretUp size={13} />
                </ScrollArrow>
                <ScrollThumb $top={140} $height={289} $width={17} />
                <ScrollSpacer />
                <ScrollArrow>
                  <FaCaretDown size={13} />
                </ScrollArrow>
              </ScrollBar>
            </ScrollFrame>
          </Panel>
        </MainColumn>

        <SideColumn>
          <SideHeader>
            <DateText>15/01/2022</DateText>
            <DateIcon>
              <FaCalendarAlt size={17} />
            </DateIcon>
            <HeaderSideIcons>
              <FaEyeSlash size={22} color="#222" />
              <FaPowerOff size={20} color="#f01010" />
            </HeaderSideIcons>
          </SideHeader>

          <SideButtons>
            <SideButton $width={58}>
              <FaListAlt size={23} />
            </SideButton>
            <SideButton $width={56}>
              <SlantBook size={21} />
            </SideButton>
            <SideButton $width={54}>
              <FaQuestionCircle size={21} />
            </SideButton>
          </SideButtons>

          <SideScroll>
            <SideCards>
              <InfoCard>
                <CardCaption>New Ornaments</CardCaption>
                <TitledBox $top={6} $height={226}>
                  <BoxTitle>Stones</BoxTitle>
                  <StoneTable>
                    <colgroup>
                      <col width={164} />
                      <col width={112} />
                      <col width={135} />
                    </colgroup>
                    <thead>
                      <tr>
                        <StoneHead>Stone</StoneHead>
                        <StoneHead $right>Pcs/Wt</StoneHead>
                        <StoneHead $right>Rate/Amount</StoneHead>
                      </tr>
                    </thead>
                    <tbody>
                      <tr>
                        <StoneCell $height={65}>
                          <StoneName>STONE</StoneName>
                          Stone
                        </StoneCell>
                        <StoneCell $right $height={65}>
                          1
                          <br />
                          0.028 (GM)
                        </StoneCell>
                        <StoneCell $right $height={65}>
                          367.50
                          <br />
                          10.29
                        </StoneCell>
                      </tr>
                      <tr>
                        <StoneCell $total $height={90}>
                          Total:-1
                        </StoneCell>
                        <StoneCell $total $right $height={90}>
                          <TallLines>
                            1
                            <br />
                            0.140(CT)
                            <br />
                            0.028(gm)
                          </TallLines>
                        </StoneCell>
                        <StoneCell $total $right $height={90}>
                          10.29
                        </StoneCell>
                      </tr>
                    </tbody>
                  </StoneTable>
                </TitledBox>

                <StoneAttrBox>
                  <ShowingRow>
                    <ShowingLabel>Showing Attributes Of :-</ShowingLabel>
                    <b>STONE</b>
                  </ShowingRow>
                  <EmptyMessage>No any attribute to show.</EmptyMessage>
                </StoneAttrBox>

                <TitledBox $top={9} $height={241}>
                  <BoxTitle>Attributes</BoxTitle>
                  <AttrBody>
                    <ShowingRow>
                      <ShowingLabel>Showing Attributes Of :-</ShowingLabel>
                      <b>DORLA</b>
                    </ShowingRow>
                    <AttrTable>
                      <colgroup>
                        <col width={250} />
                        <col width={132} />
                      </colgroup>
                      <thead>
                        <tr>
                          <AttrHead>Attributes</AttrHead>
                          <AttrHead>Value</AttrHead>
                        </tr>
                      </thead>
                      <tbody>
                        <tr>
                          <AttrName>Discount P</AttrName>
                          <AttrValue $right>0</AttrValue>
                        </tr>
                        <tr>
                          <AttrName>Hallmarking</AttrName>
                          <AttrValue>35</AttrValue>
                        </tr>
                      </tbody>
                    </AttrTable>
                  </AttrBody>
                </TitledBox>
              </InfoCard>

              <DocCard>
                <DocTitle>Document Information</DocTitle>
                <DocLinks>
                  <FaHistory size={14} />
                  <span>Audit Trail</span>
                </DocLinks>
              </DocCard>
            </SideCards>

            <ScrollBar $width={22}>
              <ScrollArrow $top={3}>
                <FaCaretUp size={13} color="#999" />
              </ScrollArrow>
              <ScrollThumb $top={2} $height={616} $width={17} />
            </ScrollBar>
          </SideScroll>
        </SideColumn>
      </Body>

      <Taskbar>
        <StartButton>
          <FaWindows size={20} />
        </StartButton>
        <TaskSearch>
          <Search size={19} strokeWidth={1.4} />
          <span>Type here to search</span>
        </TaskSearch>
        <TaskItem>
          <svg width="20" height="20" viewBox="0 0 20 20">
            <circle cx="10" cy="10" r="7.5" fill="none" stroke="#111" strokeWidth="3" />
          </svg>
        </TaskItem>
        <TaskItem>
          <TaskView />
        </TaskItem>
        <TaskItem $open>
          <FolderTask />
        </TaskItem>
        <TaskItem>
          <MonitorTask />
        </TaskItem>
        <TaskItem>
          <VncTask />
        </TaskItem>
        <TaskItem $open>
          <AnyDeskTask />
        </TaskItem>
        <TaskItem>
          <NetTask />
        </TaskItem>
        <TaskItem>
          <PhoneTask />
        </TaskItem>
        <TaskItem $open $active>
          <ChromeTask />
        </TaskItem>
        <TaskItem $open>
          <PhoneTask />
        </TaskItem>
        <TaskItem $open>
          <PaintTask />
        </TaskItem>
        <TaskItem $open>
          <CalcTask />
        </TaskItem>
        <TaskLinks>
          <span>Links</span>
          <span>Desktop</span>
          <Overflow>»</Overflow>
        </TaskLinks>
        <Tray>
          <TrayIcon $left={0}>
            <WeatherIcon />
          </TrayIcon>
          <TrayText $left={10} $size={17}>
            23°C
          </TrayText>
          <TrayIcon $left={20}>
            <svg width="16" height="10" viewBox="0 0 16 10" fill="none" stroke="#222" strokeWidth="1.2">
              <path d="M1 9l7-8 7 8" />
            </svg>
          </TrayIcon>
          <TrayIcon $left={12}>
            <MeetIcon />
          </TrayIcon>
          <TrayIcon $left={10}>
            <SyncIcon />
          </TrayIcon>
          <TrayIcon $left={10}>
            <BatteryIcon />
          </TrayIcon>
          <TrayIcon $left={12}>
            <WifiIcon />
          </TrayIcon>
          <TrayIcon $left={10}>
            <VolumeIcon />
          </TrayIcon>
          <TrayText $left={14}>ENG</TrayText>
          <Clock>
            12:05
            <br />
            15-01-2022
          </Clock>
          <Notify>
            <NotifyIcon />
            <NotifyCount>3</NotifyCount>
          </Notify>
        </Tray>
      </Taskbar>
    </Page>
  );
}
